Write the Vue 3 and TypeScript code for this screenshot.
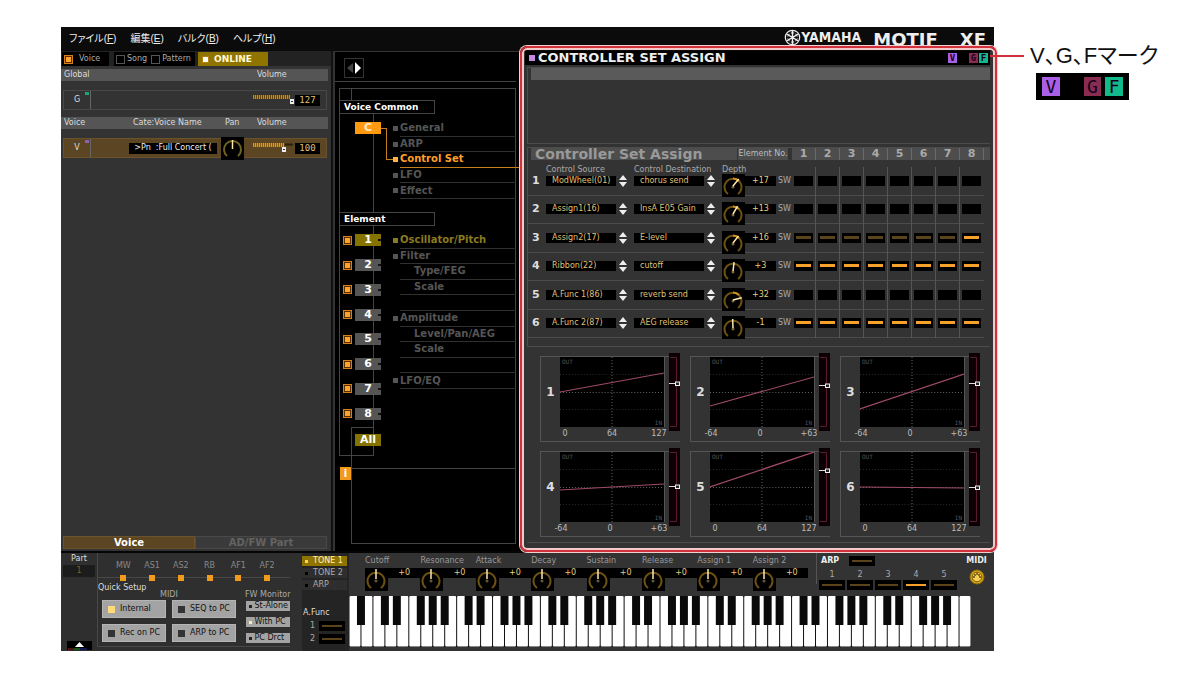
<script setup lang="ts">
import { ref, reactive, computed } from 'vue'

type Lamp = 'off' | 'dim' | 'on'

interface ControlSet {
  no: number
  source: string
  destination: string
  depth: number
  lamps: Lamp[]
}

interface Curve {
  no: number
  labels: string[]
  from: number
  to: number
  handle: number
}

interface TreeItem {
  label: string
  kind: 'item' | 'sub' | 'blank'
  state?: 'active' | 'lit'
}

const menus = [
  { text: 'ファイル', key: 'F' },
  { text: '編集', key: 'E' },
  { text: 'バルク', key: 'B' },
  { text: 'ヘルプ', key: 'H' },
]

const mode = ref('voice')
const fill = (lamp: Lamp): Lamp[] => Array.from({ length: 8 }, () => lamp)

const controlSets = reactive<ControlSet[]>([
  { no: 1, source: 'ModWheel(01)', destination: 'chorus send', depth: 17, lamps: fill('off') },
  { no: 2, source: 'Assign1(16)', destination: 'InsA E05 Gain', depth: 13, lamps: fill('off') },
  { no: 3, source: 'Assign2(17)', destination: 'E-level', depth: 16, lamps: [...fill('dim').slice(1), 'on'] },
  { no: 4, source: 'Ribbon(22)', destination: 'cutoff', depth: 3, lamps: fill('on') },
  { no: 5, source: 'A.Func 1(86)', destination: 'reverb send', depth: 32, lamps: fill('off') },
  { no: 6, source: 'A.Func 2(87)', destination: 'AEG release', depth: -1, lamps: fill('on') },
])

const unipolar = ['0', '64', '127']
const bipolar = ['-64', '0', '+63']
const curves: Curve[] = [
  { no: 1, labels: unipolar, from: 35, to: 16, handle: 30 },
  { no: 2, labels: bipolar, from: 49, to: 20, handle: 32 },
  { no: 3, labels: bipolar, from: 52, to: 17, handle: 30 },
  { no: 4, labels: bipolar, from: 38, to: 32, handle: 38 },
  { no: 5, labels: unipolar, from: 35, to: 0, handle: 22 },
  { no: 6, labels: unipolar, from: 35, to: 36, handle: 39 },
]

const commonItems: TreeItem[] = [
  { label: 'General', kind: 'item' },
  { label: 'ARP', kind: 'item' },
  { label: 'Control Set', kind: 'item', state: 'active' },
  { label: 'LFO', kind: 'item' },
  { label: 'Effect', kind: 'item' },
]

const elementItems: TreeItem[] = [
  { label: 'Oscillator/Pitch', kind: 'item', state: 'lit' },
  { label: 'Filter', kind: 'item' },
  { label: 'Type/FEG', kind: 'sub' },
  { label: 'Scale', kind: 'sub' },
  { label: '', kind: 'blank' },
  { label: 'Amplitude', kind: 'item' },
  { label: 'Level/Pan/AEG', kind: 'sub' },
  { label: 'Scale', kind: 'sub' },
  { label: '', kind: 'blank' },
  { label: 'LFO/EQ', kind: 'item' },
]

const toneKnobs = ['Cutoff', 'Resonance', 'Attack', 'Decay', 'Sustain', 'Release', 'Assign 1', 'Assign 2']
const controllers = ['MW', 'AS1', 'AS2', 'RB', 'AF1', 'AF2']
const quickSetups = ['Internal', 'SEQ to PC', 'Rec on PC', 'ARP to PC']
const monitors = ['St-Alone', 'With PC', 'PC Drct']

const signed = (n: number): string => (n >= 0 ? `+${n}` : `${n}`)
const needle = (n: number): string => `rotate(${(n / 64) * 150} 11 12)`

const whiteCount = 52
const blackKeys = computed<number[]>(() => {
  const hasSharp = [true, false, true, true, false, true, true]
  const xs: number[] = []
  for (let i = 0; i < whiteCount - 1; i++) if (hasSharp[i % 7]) xs.push((i + 1) * 12 - 4)
  return xs
})
</script>

<template>
  <div class="page">
    <div class="app">
      <header class="top">
        <nav class="menu">
          <button v-for="m in menus" :key="m.key" type="button">{{ m.text }}(<u>{{ m.key }}</u>)</button>
        </nav>
        <div class="brand">
          <svg class="emblem" viewBox="0 0 18 18" width="17" height="17" aria-hidden="true">
            <circle cx="9" cy="9" r="7.6" fill="none" stroke="#eee" stroke-width="1.3" />
            <g stroke="#eee" stroke-width="1.5" stroke-linecap="round">
              <path d="M9 9V2.5M9 9V15.5M9 9L3.4 5.8M9 9L14.6 12.2M9 9L14.6 5.8M9 9L3.4 12.2" />
              <path d="M7.7 4.2h2.6M7.7 13.8h2.6M4.2 7.6l1.3-2.2M12.5 12.6l1.3-2.2M13.8 7.6l-1.3-2.2M5.5 12.6l-1.3-2.2" stroke-width="1" />
            </g>
          </svg>
          <span class="maker">YAMAHA</span>
          <span class="model">MOTIF</span>
          <span class="model">XF</span>
        </div>
      </header>

      <main class="body">
        <section class="left">
          <div class="modes">
            <label class="mode-box first"><input v-model="mode" class="led" type="radio" name="mode" value="voice" />Voice</label>
            <div class="mode-box pair">
              <label><input v-model="mode" class="led" type="radio" name="mode" value="song" />Song</label>
              <label><input v-model="mode" class="led" type="radio" name="mode" value="pattern" />Pattern</label>
            </div>
            <button type="button" class="online"><i class="online-dot"></i>ONLINE</button>
          </div>
          <div class="strip-head"><span class="c-name">Global</span><span></span><span></span><span class="c-vol">Volume</span></div>
          <div class="strip">
            <span class="tag">G<i class="dot green"></i></span>
            <span></span><span></span>
            <label class="fader">
              <svg viewBox="0 0 43 12" width="43" height="12" aria-hidden="true">
                <path d="M1 3H38" stroke="#6a470c" stroke-width="4" />
                <path d="M1 3H38" stroke="#c88a20" stroke-width="4" stroke-dasharray="1 1" />
                <path d="M38 5h4v5h-4z" fill="#eee" /><path d="M39 7h2v1h-2z" fill="#333" />
              </svg>
              <input type="range" min="0" max="127" value="127" aria-label="Global volume" />
            </label>
            <output class="num">127</output>
          </div>
          <div class="strip-head second"><span class="c-name">Voice</span><span>Cate:Voice Name</span><span>Pan</span><span class="c-vol">Volume</span></div>
          <div class="strip voice">
            <span class="tag">V<i class="dot violet"></i></span>
            <button type="button" class="patch">&gt;Pn &nbsp;:Full Concert (</button>
            <label class="knob">
              <svg viewBox="0 0 23 23" width="23" height="23" aria-hidden="true">
                <path d="M6 19A8.500 8.500 0 1 1 17 19" fill="none" stroke="#6f6420" stroke-width="2" />
                <path d="M11.500 3V12" stroke="#ffe9a0" stroke-width="1.500" />
              </svg>
              <input type="range" min="-64" max="63" value="0" aria-label="Pan" />
            </label>
            <label class="fader">
              <svg viewBox="0 0 43 12" width="43" height="12" aria-hidden="true">
                <path d="M1 3H32" stroke="#8a5c10" stroke-width="4" />
                <path d="M1 3H32" stroke="#dc9a28" stroke-width="4" stroke-dasharray="1 1" />
                <path d="M33 2.500H41" stroke="#2a1e0c" stroke-width="2" />
                <path d="M30 5h4v5h-4z" fill="#eee" /><path d="M31 7h2v1h-2z" fill="#333" />
              </svg>
              <input type="range" min="0" max="127" value="100" aria-label="Voice volume" />
            </label>
            <output class="num">100</output>
          </div>
          <div class="part-tabs">
            <button type="button" class="on">Voice</button>
            <button type="button">AD/FW Part</button>
          </div>
        </section>

        <section class="tree">
          <svg class="wires" width="188" height="499" viewBox="0 0 188 499" aria-hidden="true">
            <g fill="none" stroke="#444" shape-rendering="crispEdges">
              <path d="M6.500 403.500V36.500H182.500V491.500H18.500" />
              <path d="M6.500 403.500H40.500V62" />
              <path d="M18.500 36V49M40.500 375.500H18.500V491.500" />
              <path d="M18 416.500H182" />
            </g>
            <path d="M48 76.500H53.500V107.500H60M67 115.500H188" fill="none" stroke="#c47f1c" shape-rendering="crispEdges" />
          </svg>
          <div class="pager">
            <button type="button" class="pager-btn" aria-label="Previous or next">
              <svg viewBox="0 0 18 18" width="18" height="18"><path d="M8 4V14L2 9z" fill="#444" /><path d="M10 3V15L16 9z" fill="#fff" /></svg>
            </button>
          </div>
          <h2 class="group">Voice Common</h2>
          <div class="branch">
            <div class="chips single"><div class="chip-row"><button type="button" class="chip common">C</button></div></div>
            <ul class="items five">
              <li v-for="it in commonItems" :key="it.label" :class="[it.kind, it.state]"><a href="#">{{ it.label }}</a></li>
            </ul>
          </div>
          <h2 class="group elements">Element</h2>
          <div class="branch">
            <div class="side">
              <div class="chips eight">
                <div v-for="n in 8" :key="n" class="chip-row">
                  <input class="led" type="checkbox" checked :aria-label="`Element ${n}`" />
                  <button type="button" class="chip" :class="{ lit: n === 1 }">{{ n }}</button>
                </div>
              </div>
              <button type="button" class="chip all">All</button>
              <button type="button" class="info">i</button>
            </div>
            <ul class="items ten">
              <li v-for="(it, i) in elementItems" :key="i" :class="[it.kind, it.state]"><a v-if="it.label" href="#">{{ it.label }}</a></li>
            </ul>
          </div>
        </section>

        <section class="right">
          <div class="frame">
            <div class="title">
              <h1>CONTROLLER SET ASSIGN</h1>
              <div class="marks"><span class="mark v">V</span><span class="mark g">G</span><span class="mark f">F</span></div>
            </div>
            <div class="note"><div class="bar"></div></div>

            <div class="assign">
              <div class="assign-head">
                <h2>Controller Set Assign</h2>
                <span class="elno">Element No.</span>
                <span v-for="n in 8" :key="n" class="col">{{ n }}</span>
                <span class="tail"></span>
              </div>
              <div class="rows">
                <div v-for="c in controlSets" :key="c.no" class="row">
                  <b class="no">{{ c.no }}</b>
                  <label class="pick">
                    <span v-if="c.no === 1" class="cap">Control Source</span>
                    <span class="field">
                      <select :aria-label="`Control source ${c.no}`"><option>{{ c.source }}</option></select>
                      <svg viewBox="0 0 8 12" width="8" height="12" aria-hidden="true"><path d="M0 5L4 0L8 5zM0 7H8L4 12z" fill="#eee" /></svg>
                    </span>
                  </label>
                  <label class="pick">
                    <span v-if="c.no === 1" class="cap">Control Destination</span>
                    <span class="field">
                      <select :aria-label="`Control destination ${c.no}`"><option>{{ c.destination }}</option></select>
                      <svg viewBox="0 0 8 12" width="8" height="12" aria-hidden="true"><path d="M0 5L4 0L8 5zM0 7H8L4 12z" fill="#eee" /></svg>
                    </span>
                  </label>
                  <div class="pick">
                    <span v-if="c.no === 1" class="cap">Depth</span>
                    <div class="depth">
                      <label class="knob">
                        <svg viewBox="0 0 23 23" width="23" height="23" aria-hidden="true">
                          <path d="M6 20A8.500 8.500 0 1 1 16 20" fill="none" stroke="#6e5212" stroke-width="2" />
                          <path v-if="c.depth > 10" d="M11 4.500A8.500 8.500 0 0 1 17 7" fill="none" stroke="#d09020" stroke-width="2" />
                          <path d="M11 11.500V14.500M9.500 13H12.500" stroke="#a98a50" />
                          <path d="M11 3V12" stroke="#ffe9b0" stroke-width="1.500" :transform="needle(c.depth)" />
                        </svg>
                        <input v-model.number="c.depth" type="range" min="-64" max="63" :aria-label="`Depth ${c.no}`" />
                      </label>
                      <output class="value">{{ signed(c.depth) }}</output>
                    </div>
                  </div>
                  <span class="sw">SW</span>
                  <span v-for="(l, i) in c.lamps" :key="i" class="cell">
                    <input type="checkbox" class="lamp" :class="l" :checked="l === 'on'" :aria-label="`Switch ${c.no}, element ${i + 1}`" />
                  </span>
                </div>
              </div>
            </div>

            <div class="curves">
              <figure v-for="g in curves" :key="g.no" class="curve">
                <b>{{ g.no }}</b>
                <div class="plot">
                  <svg viewBox="0 0 105 70" preserveAspectRatio="none" aria-hidden="true">
                    <rect width="105" height="70" fill="#000" />
                    <path d="M0 17.500H105M0 52.500H105" stroke="#2c2c2c" stroke-dasharray="1 2" />
                    <path d="M0 35.500H105M52.500 0V70" stroke="#666" stroke-dasharray="1 2" />
                    <path :d="`M0 ${g.from}L105 ${g.to}`" stroke="#a04a68" stroke-width="1.200" />
                  </svg>
                  <span class="out">OUT</span><span class="in">IN</span>
                </div>
                <label class="slide">
                  <svg viewBox="0 0 11 78" width="11" height="78" aria-hidden="true">
                    <rect width="11" height="78" fill="#0c0004" />
                    <path d="M1 4.500H7.500V73.500H1" fill="none" stroke="#571c30" />
                    <path :d="`M0 ${g.handle}.5H7`" stroke="#ddd" />
                    <rect x="6.500" :y="g.handle - 1" width="4" height="3.500" fill="#222" stroke="#eee" />
                  </svg>
                  <input type="range" min="-64" max="63" :aria-label="`Curve ${g.no}`" />
                </label>
                <figcaption :class="{ uni: g.labels[0] === '0' }"><span v-for="t in g.labels" :key="t">{{ t }}</span></figcaption>
              </figure>
            </div>
          </div>
        </section>
      </main>

      <footer class="deck">
        <div class="setup">
          <div class="part"><b>Part</b><output>1</output>
            <button type="button" class="eject" aria-label="Expand">
              <svg viewBox="0 0 25 9" width="25" height="9"><path d="M12.500 1L17 6H8z" fill="#fff" /><path d="M1 8H7" stroke="#a22" /><path d="M7 8H13" stroke="#2a2" /><path d="M13 8H20" stroke="#23a" /></svg>
            </button>
          </div>
          <div class="setup-main">
            <div class="ctls"><span v-for="c in controllers" :key="c">{{ c }}<i></i></span></div>
            <div class="quick">
              <div class="quick-head"><b>Quick Setup</b><span>MIDI</span><span>FW Monitor</span></div>
              <div class="quick-body">
                <div class="quick-btns">
                  <button v-for="(q, i) in quickSetups" :key="q" type="button"><i :class="{ on: i === 0 }"></i>{{ q }}</button>
                </div>
                <div class="mon-btns">
                  <button v-for="(m, i) in monitors" :key="m" type="button"><i :class="{ on: i === 1 }"></i>{{ m }}</button>
                </div>
              </div>
            </div>
          </div>
        </div>

        <div class="tones">
          <button type="button" class="tone on"><i></i>TONE 1</button>
          <button type="button" class="tone"><i></i>TONE 2</button>
          <button type="button" class="tone"><i></i>ARP</button>
          <b>A.Func</b>
          <label class="afunc">1<input type="checkbox" class="lamp wide dim" /></label>
          <label class="afunc">2<input type="checkbox" class="lamp wide dim" /></label>
        </div>

        <div class="play">
          <div class="play-top">
            <div class="knobs">
              <div v-for="k in toneKnobs" :key="k" class="tk">
                <span>{{ k }}</span>
                <div class="depth">
                  <label class="knob">
                    <svg viewBox="0 0 23 23" width="23" height="23" aria-hidden="true">
                      <path d="M6 20A8.500 8.500 0 1 1 16 20" fill="none" stroke="#6e5212" stroke-width="2" />
                      <path d="M11 11.500V14.500M9.500 13H12.500" stroke="#88744a" />
                      <path d="M11 1V11" stroke="#ffe9b0" stroke-width="1.500" />
                    </svg>
                    <input type="range" min="-64" max="63" value="0" :aria-label="k" />
                  </label>
                  <output class="value">+0</output>
                </div>
              </div>
            </div>
            <div class="arp">
              <label class="arp-main"><b>ARP</b><input type="checkbox" class="lamp wide dim" /></label>
              <div class="arp-list">
                <label v-for="n in 5" :key="n">{{ n }}<input type="checkbox" class="lamp wide" :class="n === 4 ? 'on' : 'dim'" :checked="n === 4" /></label>
              </div>
            </div>
            <div class="midi">
              <b>MIDI</b>
              <svg viewBox="0 0 16 16" width="16" height="16" aria-hidden="true">
                <circle cx="8" cy="8" r="7" fill="#d9a514" stroke="#8a6a08" /><circle cx="8" cy="8" r="4.800" fill="#f3cf55" stroke="#7a5c08" />
                <g fill="#5a4206"><circle cx="5" cy="8" r="0.900" /><circle cx="6" cy="6" r="0.900" /><circle cx="8" cy="5" r="0.900" /><circle cx="10" cy="6" r="0.900" /><circle cx="11" cy="8" r="0.900" /></g>
              </svg>
            </div>
          </div>
          <svg class="piano" viewBox="0 0 624 51" preserveAspectRatio="none" role="img" aria-label="Keyboard">
            <rect width="624" height="51" fill="#111" />
            <rect v-for="i in whiteCount" :key="i" :x="(i - 1) * 12 + 0.5" y="0" width="11" height="50.500" rx="1" fill="#fff" />
            <rect v-for="x in blackKeys" :key="x" :x="x" y="0" width="8" height="29" fill="#0a0a0a" />
          </svg>
        </div>
      </footer>
    </div>

    <aside class="callout">
      <div class="callout-line"><i></i><strong>V、G、Fマーク</strong></div>
      <div class="marks big"><span class="mark v">V</span><span class="mark g">G</span><span class="mark f">F</span></div>
    </aside>
  </div>
</template>

<style>
html, body { background: #fff; }
</style>

<style scoped>
* { box-sizing: border-box; }
.page {
  display: grid;
  grid-template-columns: minmax(0, 1fr) 206px;
  padding: 27px 0 0 61px;
  font: 8px/10px "DejaVu Sans", "Noto Sans CJK JP", sans-serif;
  color: #aaa;
}
button, input, select { font: inherit; color: inherit; margin: 0; padding: 0; border: 0; background: none; border-radius: 0; }
h1, h2, ul, figure { margin: 0; padding: 0; }
a { color: inherit; text-decoration: none; }
svg { display: block; }
input[type="range"] { position: absolute; inset: 0; width: 100%; height: 100%; opacity: 0; }

.app { background: #333; min-width: 0; }
.top { display: flex; justify-content: space-between; height: 24px; background: #0b0b0b; color: #eee; }
.menu { display: flex; gap: 14px; padding-left: 8px; align-items: center; font: 10px/14px "Liberation Sans", "Noto Sans CJK JP", sans-serif; font-feature-settings: "palt"; }
.brand { display: flex; align-items: flex-start; padding: 2px 8px 0 0; }
.maker { font: bold 14px/17px "Liberation Sans Narrow", "DejaVu Sans Condensed", sans-serif; margin-right: 12px; }
.model { font: bold 18px/21px "DejaVu Sans", sans-serif; }
.model + .model { margin-left: 22px; }

.body { display: grid; grid-template-columns: 272px 188px minmax(0, 1fr); background: #333; }

/* part list */
.left { display: flex; flex-direction: column; border-right: 2px solid #111; }
.modes { display: flex; padding: 1px 0 0 1px; height: 15px; background: #222; }
.mode-box { display: flex; align-items: center; background: #000; height: 14px; }
.mode-box label { display: flex; align-items: center; }
.mode-box .led { margin: 0 2px; }
.first { width: 47px; gap: 4px; }
.pair { width: 81px; margin: 0 3px 0 5px; gap: 2px; }
.online { display: flex; align-items: center; gap: 6px; width: 70px; height: 14px; background: #8f7400; color: #fff8d8; font-weight: bold; font-size: 9px; padding-left: 5px; }
.online-dot { width: 5px; height: 5px; background: #fff; outline: 1px solid #b08010; }
.led { appearance: none; width: 9px; height: 9px; border: 1px solid #555; background: #000; flex: none; }
.led:checked { border-color: #d5801c; background: #ffa52c; box-shadow: inset 0 0 0 1px #5b2c00; }
.strip-head { display: grid; grid-template-columns: 69px 92px 32px 1fr; height: 12px; margin: 3px 3px 0 0; padding-left: 3px; line-height: 12px; background: #555; color: #ddd; }
.strip-head.second { margin-top: 7px; }
.strip { display: grid; grid-template-columns: 27px 1fr 30px 42px 25px; column-gap: 1px; align-items: center; height: 20px; margin: 9px 4px 0 2px; padding-right: 6px; border: 1px solid #484848; }
.strip.voice { background: #5b4522; border-color: #6b522b; }
.tag { position: relative; align-self: stretch; line-height: 18px; text-align: center; border-right: 1px solid #666; color: #ddd; }
.dot { position: absolute; right: 1px; top: 1px; width: 4px; height: 3px; background: #1ba37c; }
.dot.violet { background: #8d60b0; }
.patch { justify-self: end; width: 88px; height: 11px; margin-right: 3px; background: #000; color: #eee; white-space: nowrap; }
.knob, .fader, .slide { position: relative; display: block; }
.knob svg { background: #000; }
.strip .knob { margin: -4px 0; width: 23px; }
.num { background: #000; color: #e0c078; text-align: center; height: 11px; line-height: 11px; font-family: "DejaVu Sans Mono", monospace; font-size: 9px; }
.part-tabs { display: grid; grid-template-columns: 1fr 1fr; height: 13px; margin: auto 4px 2px 2px; font-weight: bold; font-size: 10px; }
.part-tabs button { background: #3a3a3a; border: 1px solid #494949; line-height: 10px; color: #636363; }
.part-tabs .on { background: #5b4522; color: #fff; border-color: #6b522b; }

/* parameter tree */
.tree { position: relative; background: #000; border-top: 1px solid #333; border-left: 2px solid #333; font-size: 10px; }
.wires { position: absolute; left: -2px; top: 0; }
.pager { padding: 6px 0 0 9px; height: 30px; border-bottom: 1px solid #444; margin-right: 5px; }
.pager-btn { width: 20px; height: 20px; border: 1px solid #333; }
.group { position: relative; width: 96px; height: 14px; margin: 18px 0 0 4px; padding-left: 4px; border: 1px solid #444; background: #000; color: #fff; font-size: 9px; line-height: 12px; }
.group.elements { margin-top: 13px; }
.branch { position: relative; display: flex; }
.side { flex: none; }
.chips { width: 50px; display: grid; }
.chips.single { height: 78px; padding-top: 8px; align-items: start; }
.chips.eight { height: 198px; margin-top: 2px; }
.chip-row { display: flex; align-items: center; gap: 3px; padding-left: 8px; }
.single .chip-row { padding-left: 20px; }
.chip { position: relative; width: 26px; height: 12px; background: #555; color: #fff; font: bold 11px/12px "DejaVu Sans", sans-serif; }
.chip-row .chip:not(.common)::after { content: ""; position: absolute; right: 0; top: 5px; width: 3px; height: 2px; background: #111; }
.chip.common { background: #ff9a10; color: #ffe8c0; }
.chip.lit, .chip.all { background: #857300; }
.chip.all { display: block; margin: 8px 0 0 20px; }
.info { display: block; width: 11px; height: 13px; margin: 21px 0 0 5px; background: #f39a1c; color: #fff; font-weight: bold; line-height: 13px; }
.items { flex: 1; list-style: none; display: grid; grid-auto-rows: 1fr; padding: 0 5px 0 15px; color: #555; font-weight: bold; }
.five { height: 78px; margin-top: 7px; }
.ten { height: 156px; margin-top: 7px; }
.items li { display: flex; align-items: center; min-height: 0; border-bottom: 1px solid #303030; position: relative; line-height: 12px; }
.items li.sub { padding-left: 14px; color: #555; }
.items li.item::before { content: ""; position: absolute; left: -7px; top: 5px; width: 5px; height: 5px; background: #555; }
.items li.active { color: #ff9f2a; border-bottom-color: transparent; }
.items li.active::before { background: #ffb14a; }
.items li.lit { color: #8a7a20; }
.items li.lit::before { background: #8a7a20; }

/* controller editor */
.right { position: relative; padding-left: 4px; }
.right::before { content: ""; position: absolute; inset: -5px -3px -1px -1px; border: 2px solid #d2303a; border-radius: 7px; box-shadow: 0 0 0 1px #f3d0d0, inset 0 0 0 2px #f3c9c9; z-index: 2; pointer-events: none; }
.frame { padding: 0 4px 8px 0; }
.title { display: flex; justify-content: space-between; align-items: center; height: 14px; padding: 0 2px 0 4px; background: #000; }
h1 { display: flex; align-items: center; gap: 3px; color: #eee; font-size: 13px; line-height: 14px; font-weight: bold; }
h1::before { content: ""; width: 6px; height: 6px; background: #c68be0; }
.marks { display: flex; background: #000; gap: 1px; }
.mark { width: 9px; height: 10px; text-align: center; color: #160020; font: bold 9px/10px "DejaVu Sans Mono", monospace; }
.mark.v { background: #a95fe6; margin-right: 11px; }
.mark.g { background: #8a2c50; }
.mark.f { background: #12b98a; }
.note { height: 77px; margin: 2px 0 0 2px; border: solid #4c4c4c; border-width: 1px 0 1px 1px; padding-left: 3px; }
.bar { height: 12px; background: #5a5a5a; }
.assign { margin: 3px 0 0 2px; border: solid #4c4c4c; border-width: 1px 0 1px 1px; padding-bottom: 8px; }
.assign-head { display: flex; height: 12px; padding-left: 3px; line-height: 12px; }
.assign-head > * { background: #4d4d4d; }
.assign-head h2 { flex: 1; padding-left: 4px; color: #999; font-size: 14px; line-height: 12px; white-space: nowrap; }
.elno { width: 50px; margin: 0 4px 0 1px; color: #bbb; white-space: nowrap; text-align: center; }
.col { width: 24px; border-right: 1px solid #6a6a6a; text-align: center; font-weight: bold; font-size: 11px; color: #aaa; }
.tail { width: 6px; }
.rows { display: grid; grid-template-rows: repeat(6, 1fr); height: 171px; margin: 7px 6px 0 0; position: relative; }
.row { display: grid; grid-template-columns: 18px minmax(0, 1fr) minmax(0, 1fr) 54px 16px repeat(8, 24px); min-height: 0; border-bottom: 1px solid #4c4c4c; }
.no { align-self: end; padding: 0 0 7px 4px; color: #ddd; font: bold 11px/14px "DejaVu Sans", sans-serif; }
.pick { display: flex; flex-direction: column; justify-content: flex-end; padding-bottom: 9px; min-height: 0; }
.cap { line-height: 8px; margin-bottom: 2px; white-space: nowrap; }
.field { display: flex; align-items: center; gap: 3px; height: 10px; padding-right: 7px; }
.field svg { flex: none; }
select { appearance: none; flex: 1; min-width: 0; height: 10px; padding-left: 6px; background: #000; color: #e0c078; line-height: 10px; }
.depth { display: flex; align-items: flex-start; height: 10px; }
.row .knob { margin-top: -2px; }
.value { flex: 1; height: 10px; background: #000; color: #e8cd80; text-align: center; font: 8px/10px "DejaVu Sans", sans-serif; }
.sw { align-self: end; padding: 0 0 9px 2px; font-size: 8px; }
.cell { display: flex; align-items: flex-end; justify-content: flex-start; padding: 0 0 10px 2px; border-right: 1px solid #555; margin-bottom: -1px; }
.cell:last-child { border-right: 0; }
.lamp { appearance: none; position: relative; width: 19px; height: 10px; background: #000; }
.lamp::after { content: ""; position: absolute; inset: 3px 2px 4px; background: transparent; }
.lamp.dim::after { background: #5b431c; }
.lamp.on::after { background: #f7a12a; }
.lamp.wide { width: 26px; }
.lamp.wide::after { inset: 4px 3px 4px; }

.curves { display: grid; grid-template-columns: repeat(3, minmax(0, 1fr)); gap: 9px 10px; margin-left: 2px; padding: 9px 10px 5px 13px; border-bottom: 1px solid #4c4c4c; }
.curve { display: grid; grid-template-columns: 19px minmax(0, 1fr) 11px; grid-template-rows: 70px 14px; height: 86px; border: solid #555; border-width: 1px 0 1px 1px; }
.curve > b { align-self: center; text-align: center; color: #ddd; font-size: 12px; }
.plot { position: relative; margin-right: 4px; border-right: 1px solid #555; }
.plot svg { width: 100%; height: 70px; }
.out, .in { position: absolute; color: #555; font: 6px/8px "DejaVu Sans Mono", monospace; }
.out { left: 2px; top: 1px; }
.in { right: 2px; bottom: 0; }
.slide { height: 78px; margin-top: -4px; }
figcaption { grid-column: 1 / -1; display: grid; grid-template-columns: 34px 1fr 34px; padding: 1px 4px 0 3px; text-align: center; color: #bbb; line-height: 12px; }
figcaption.uni { padding-left: 7px; }

/* performance deck */
.deck { display: grid; grid-template-columns: 241px 47px minmax(0, 1fr); border-top: 2px solid #050505; height: 100px; background: #333; position: relative; }
.setup { display: grid; grid-template-columns: 36px 1fr; background: #2f2f2f; }
.part { display: flex; flex-direction: column; align-items: center; padding-top: 1px; }
.part b, .quick-head b { color: #ddd; font-weight: normal; }
.part output { width: 32px; height: 12px; margin-top: 1px; background: #1c1c1c; color: #7a6420; text-align: center; line-height: 12px; }
.eject { width: 25px; height: 9px; background: #000; margin: auto 0 1px; }
.setup-main { border-left: 1px solid #484848; margin: 0 12px 4px 0; border-bottom: 1px solid #484848; }
.ctls { display: grid; grid-template-columns: repeat(6, 1fr); height: 30px; padding: 8px 9px 0 11px; color: #888; background: linear-gradient(#484848, #484848) 0 24px / 100% 1px no-repeat; }
.ctls span { display: flex; flex-direction: column; align-items: center; }
.ctls i { width: 6px; height: 6px; margin-top: 4px; background: #f29a1c; }
.quick-head { display: grid; grid-template-columns: 62px 85px 1fr; height: 17px; white-space: nowrap; }
.quick-head span { align-self: end; }
.quick-body { display: flex; justify-content: space-between; padding-left: 4px; }
.quick-btns { display: grid; grid-template-columns: 64px 64px; grid-auto-rows: 18px; gap: 6px; }
.quick-btns button { display: flex; align-items: center; gap: 5px; padding-left: 5px; background: #a3a3a3; color: #111; border: 1px solid #b5b5b5; white-space: nowrap; }
.quick-btns i { width: 7px; height: 7px; background: #333; flex: none; }
.quick-btns i.on { background: #ffd97a; }
.mon-btns { display: grid; grid-auto-rows: 10px; gap: 6px; width: 44px; padding-top: 1px; }
.mon-btns button { display: flex; align-items: center; gap: 2px; padding-left: 3px; background: #a3a3a3; color: #111; white-space: nowrap; }
.mon-btns i { width: 3px; height: 3px; background: #222; flex: none; }
.mon-btns i.on { background: #ffe9b0; }

.tones { display: flex; flex-direction: column; background: #242424; padding-top: 3px; }
.tone { display: flex; align-items: center; gap: 5px; width: 45px; height: 10px; margin-bottom: 2px; padding-left: 3px; background: #2e2e2e; white-space: nowrap; }
.tone i { width: 3px; height: 3px; background: #000; }
.tone.on { background: #8f7400; color: #fff2c0; }
.tone.on i { background: #ffd060; }
.tones b { margin: 16px 0 1px 1px; color: #ddd; font-weight: normal; }
.afunc { display: flex; justify-content: space-between; align-items: center; height: 13px; padding: 0 4px 0 8px; }

.play { display: flex; flex-direction: column; min-width: 0; }
.play-top { display: flex; height: 41px; }
.knobs { flex: 1; display: grid; grid-template-columns: repeat(8, minmax(0, 1fr)); padding: 3px 8px 0 16px; color: #999; }
.tk span { display: block; height: 12px; white-space: nowrap; }
.knobs .value { line-height: 9px; }
.arp { width: 143px; padding: 3px 0 0 2px; border-left: 1px solid #555; height: 31px; }
.arp b, .midi b { color: #eee; }
.arp-main { display: flex; align-items: center; gap: 10px; padding-left: 2px; height: 10px; }
.arp-list { display: grid; grid-template-columns: repeat(5, 1fr); padding-top: 4px; }
.arp-list label { display: flex; flex-direction: column; width: 26px; text-align: center; align-items: center; }
.midi { width: 35px; padding-top: 3px; display: flex; flex-direction: column; align-items: center; gap: 3px; font-size: 8px; }
.midi b { font-weight: bold; }
.piano { width: calc(100% - 23px); height: 51px; margin-top: 2px; }

/* callout beside the window */
.callout { padding-top: 16px; }
.callout-line { display: flex; align-items: center; gap: 6px; height: 26px; margin-left: -4px; position: relative; z-index: 3; }
.callout-line i { width: 34px; height: 2px; background: #d2303a; flex: none; }
.callout strong { color: #111; font: 400 22px/26px "Liberation Sans", "Noto Sans CJK JP", sans-serif; font-feature-settings: "palt"; white-space: nowrap; }
.marks.big { width: 93px; height: 27px; margin: 4px 0 0 42px; padding: 4px 6px; gap: 4px; }
.big .mark { width: 18px; height: 19px; font-size: 18px; line-height: 19px; font-weight: normal; }
.big .mark.v { margin-right: 20px; }
</style>
